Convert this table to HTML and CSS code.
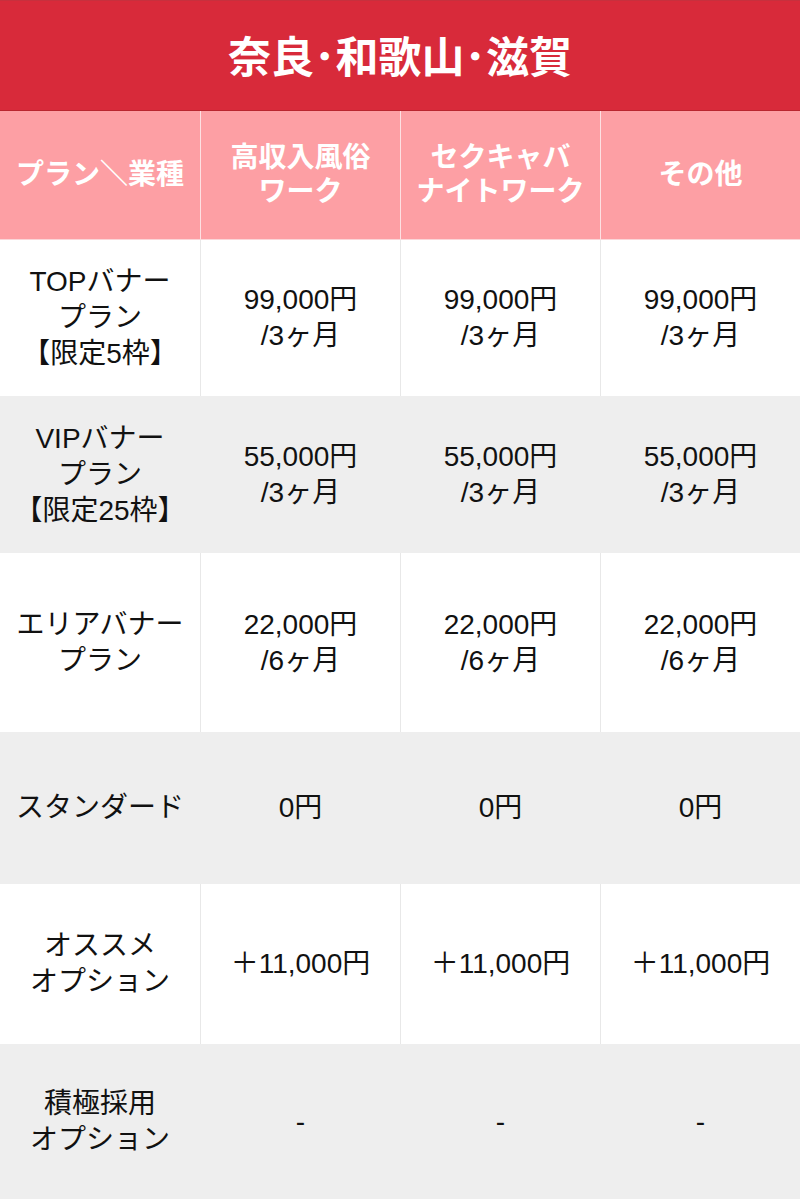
FILE: index.html
```html
<!DOCTYPE html>
<html lang="ja">
<head>
<meta charset="utf-8">
<title>奈良・和歌山・滋賀 料金表</title>
<link rel="stylesheet" href="styles.css">
</head>
<body>
<div class="page">
  <div class="title">奈良･和歌山･滋賀</div>
  <div class="table">
    <div class="cell head">プラン＼業種</div>
    <div class="cell head">高収入風俗<br>ワーク</div>
    <div class="cell head">セクキャバ<br>ナイトワーク</div>
    <div class="cell head">その他</div>

    <div class="cell">TOPバナー<br>プラン<br>【限定5枠】</div>
    <div class="cell">99,000円<br>/3ヶ月</div>
    <div class="cell">99,000円<br>/3ヶ月</div>
    <div class="cell">99,000円<br>/3ヶ月</div>

    <div class="cell alt">VIPバナー<br>プラン<br>【限定25枠】</div>
    <div class="cell alt">55,000円<br>/3ヶ月</div>
    <div class="cell alt">55,000円<br>/3ヶ月</div>
    <div class="cell alt">55,000円<br>/3ヶ月</div>

    <div class="cell">エリアバナー<br>プラン</div>
    <div class="cell">22,000円<br>/6ヶ月</div>
    <div class="cell">22,000円<br>/6ヶ月</div>
    <div class="cell">22,000円<br>/6ヶ月</div>

    <div class="cell alt">スタンダード</div>
    <div class="cell alt">0円</div>
    <div class="cell alt">0円</div>
    <div class="cell alt">0円</div>

    <div class="cell">オススメ<br>オプション</div>
    <div class="cell">＋11,000円</div>
    <div class="cell">＋11,000円</div>
    <div class="cell">＋11,000円</div>

    <div class="cell alt">積極採用<br>オプション</div>
    <div class="cell alt">-</div>
    <div class="cell alt">-</div>
    <div class="cell alt">-</div>
  </div>
</div>
</body>
</html>
```

FILE: styles.css
```css
html, body {
  margin: 0;
  padding: 0;
  background: #ffffff;
}

.page {
  width: 800px;
  font-family: "Liberation Sans", "Noto Sans CJK JP", sans-serif;
  color: #111111;
}

.title {
  height: 111px;
  border-top: 1px solid #c7303d;
  border-bottom: 1px solid #b9262f;
  background: #d82a3a;
  color: #ffffff;
  font-family: "Noto Sans CJK JP", sans-serif;
  font-weight: 700;
  font-size: 43px;
  line-height: 1;
  display: flex;
  align-items: center;
  justify-content: center;
  padding-bottom: 2px;
  box-sizing: border-box;
}

.table {
  display: grid;
  grid-template-columns: 201px 200px 200px 199px;
  grid-template-rows: 129px 156px 157px 179px 152px 160px 155px;
}

.cell {
  display: flex;
  align-items: center;
  justify-content: center;
  text-align: center;
  font-size: 28px;
  line-height: 36px;
  background: #ffffff;
  border-right: 1px solid #e8e8e8;
}

.cell:nth-child(4n) {
  border-right: none;
}

.cell.alt {
  background: #eeeeee;
  border-right-color: #eeeeee;
}

.cell.head {
  background: #fd9fa4;
  color: #ffffff;
  font-weight: 700;
  font-size: 28px;
  line-height: 34px;
  border-right-color: #fde0e2;
  border-bottom: 1px solid #fbd6d8;
}
```
